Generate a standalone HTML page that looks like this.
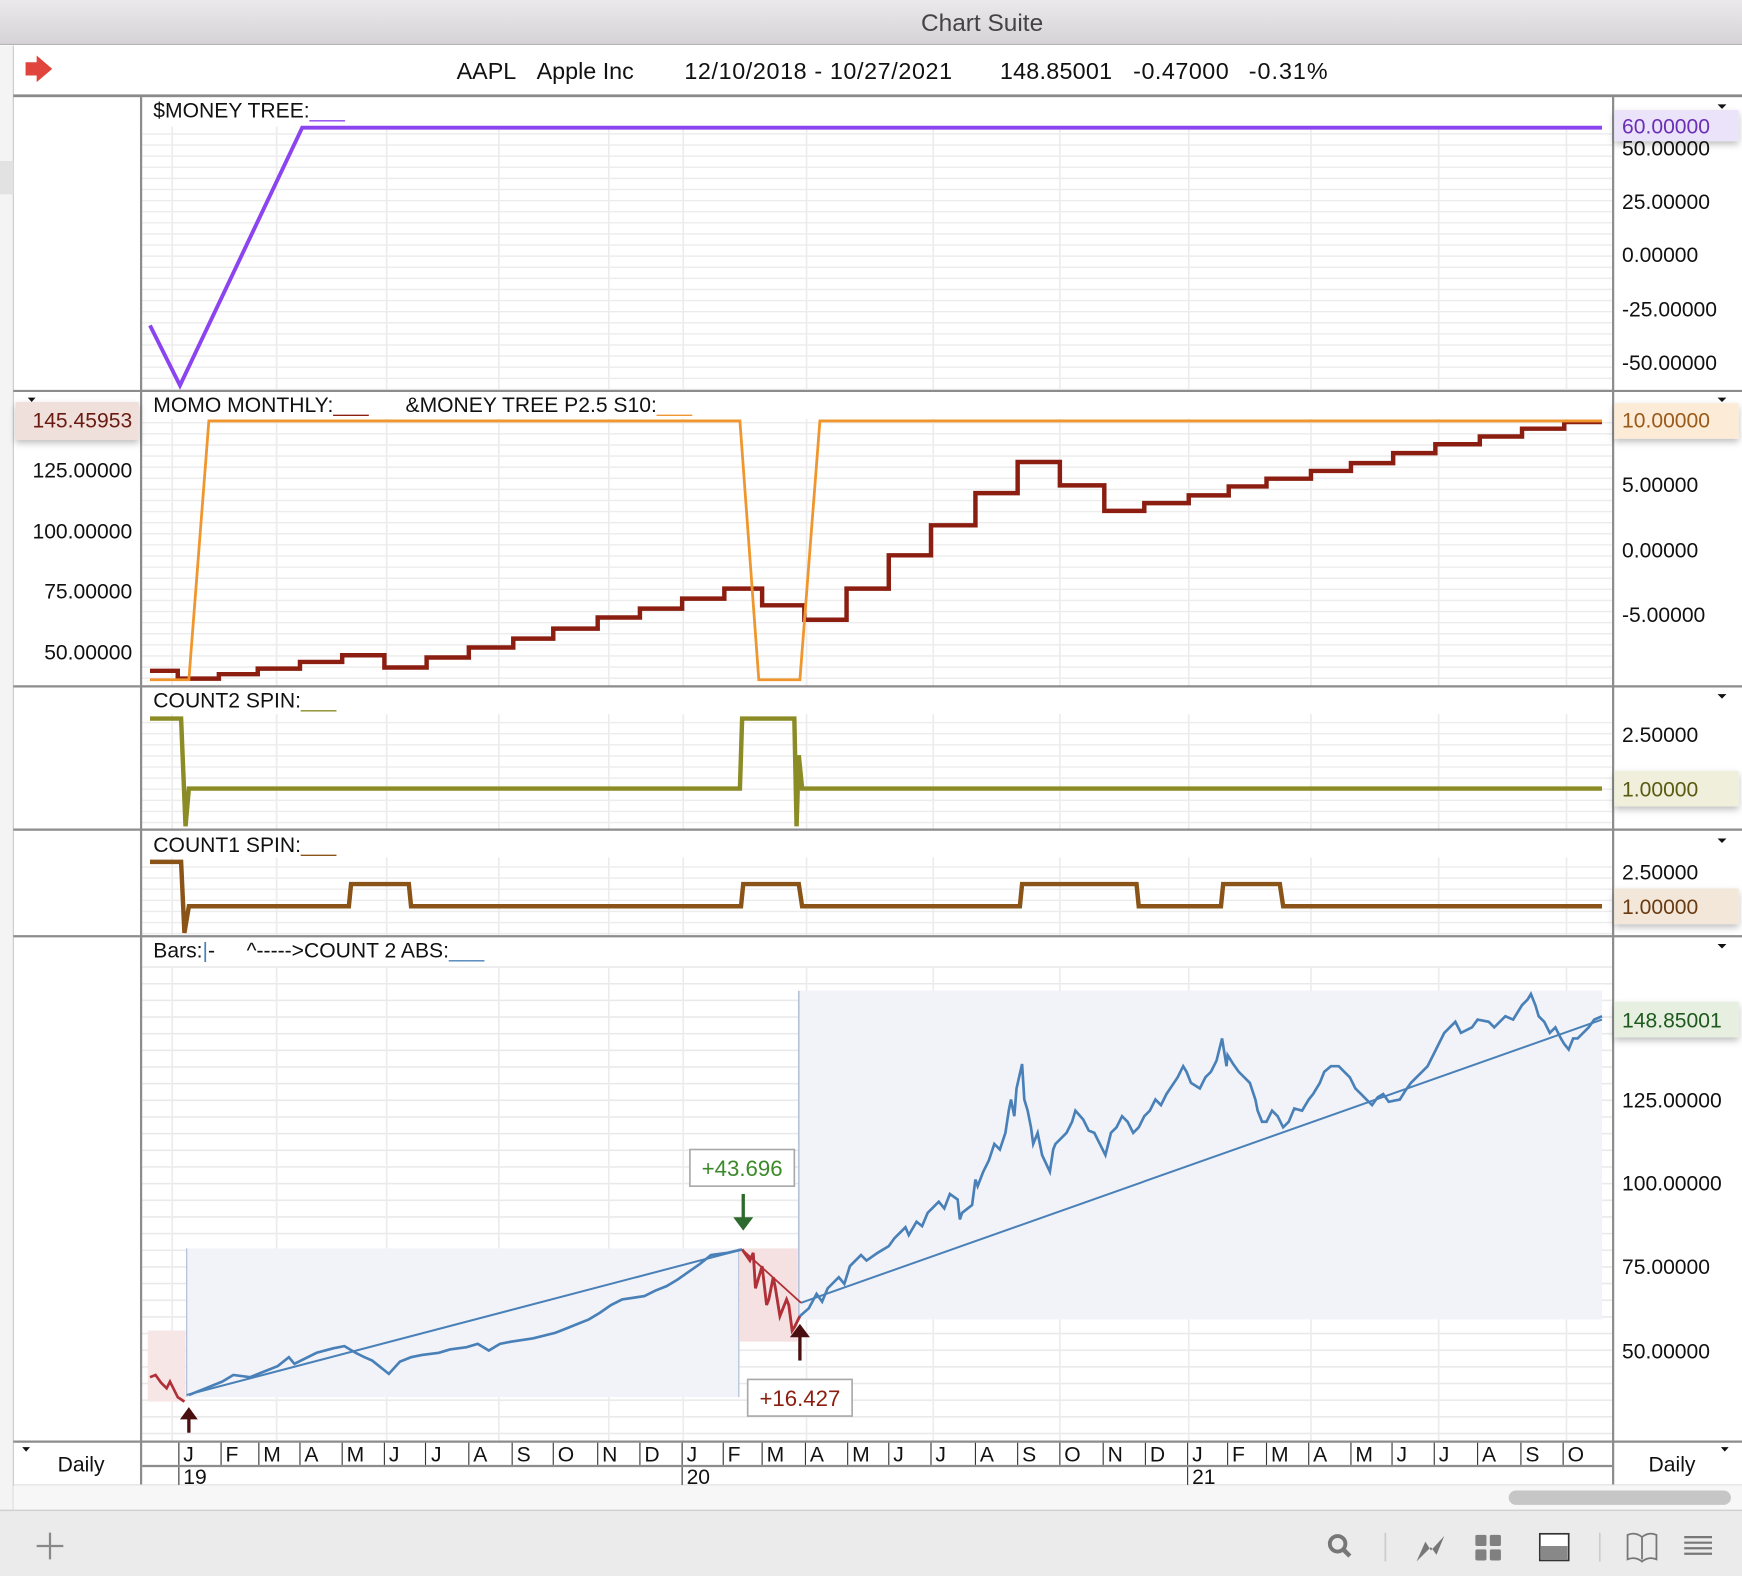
<!DOCTYPE html>
<html><head><meta charset="utf-8"><style>
html,body{margin:0;padding:0;background:#fff;}
svg{display:block;}
text{font-family:"Liberation Sans",Arial,sans-serif;}
</style></head><body>
<svg width="1742" height="1576" viewBox="0 0 1568 1419" preserveAspectRatio="none" xmlns="http://www.w3.org/2000/svg">
<defs>
<linearGradient id="tb" x1="0" y1="0" x2="0" y2="1"><stop offset="0" stop-color="#ebe9eb"/><stop offset="1" stop-color="#d5d3d5"/></linearGradient>
<pattern id="hg" width="20" height="10" patternUnits="userSpaceOnUse"><rect width="20" height="10" fill="#fff"/><rect y="0" width="20" height="1.2" fill="#ebebeb"/></pattern>
<pattern id="hg2" width="20" height="15" patternUnits="userSpaceOnUse"><rect width="20" height="15" fill="#fff"/><rect y="0" width="20" height="1.4" fill="#e9e9e9"/></pattern>
<filter id="sh" x="-20%" y="-30%" width="140%" height="180%"><feDropShadow dx="0" dy="3" stdDeviation="3" flood-color="#000" flood-opacity="0.25"/></filter>
</defs>
<rect width="1568" height="1419" fill="#fff"/>
<rect x="0" y="0" width="1568" height="40" fill="url(#tb)"/>
<line x1="0" y1="40" x2="1568" y2="40" stroke="#b5b5b5"/>
<text x="884" y="28" font-size="22" fill="#444" text-anchor="middle">Chart Suite</text>
<rect x="0" y="41" width="12" height="1378" fill="#f4f4f4"/>
<line x1="12" y1="41" x2="12" y2="1360" stroke="#c8c8c8"/>
<rect x="0" y="145" width="12" height="30" fill="#e2e2e2"/>
<path d="M23 56h10v-6l14 12-14 12v-6h-10z" fill="#e0443c"/>
<g font-size="21" fill="#111">
<text x="411" y="71">AAPL</text><text x="483" y="71">Apple Inc</text>
<text x="616" y="71" textLength="241">12/10/2018 - 10/27/2021</text>
<text x="900" y="71" textLength="101">148.85001</text><text x="1020" y="71" textLength="86">-0.47000</text><text x="1124" y="71" textLength="71">-0.31%</text>
</g>
<rect x="12" y="85" width="1556" height="2.5" fill="#8a8a8a"/>
<rect x="128" y="88" width="1323" height="264" fill="url(#hg)"/>
<rect x="128" y="353" width="1323" height="265" fill="url(#hg)"/>
<rect x="128" y="619" width="1323" height="128" fill="url(#hg)"/>
<rect x="128" y="748" width="1323" height="95" fill="url(#hg)"/>
<rect x="128" y="860" width="1323" height="437" fill="url(#hg2)"/>
<rect x="128" y="88" width="1323" height="26" fill="#fff"/>
<rect x="128" y="353" width="1323" height="24" fill="#fff"/>
<rect x="128" y="619" width="1323" height="24" fill="#fff"/>
<rect x="128" y="748" width="1323" height="24" fill="#fff"/>
<rect x="128" y="844" width="1323" height="20" fill="#fff"/>
<g stroke="#ececec" stroke-width="1.5">
<path d="M155 114V352M249 114V352M348 114V352M449 114V352M548 114V352M615 114V352M726 114V352M840 114V352M954 114V352M1070 114V352M1180 114V352M1295 114V352M1410 114V352"/>
<path d="M155 377V618M249 377V618M348 377V618M449 377V618M548 377V618M615 377V618M726 377V618M840 377V618M954 377V618M1070 377V618M1180 377V618M1295 377V618M1410 377V618"/>
<path d="M155 643V747M249 643V747M348 643V747M449 643V747M548 643V747M615 643V747M726 643V747M840 643V747M954 643V747M1070 643V747M1180 643V747M1295 643V747M1410 643V747"/>
<path d="M155 772V843M249 772V843M348 772V843M449 772V843M548 772V843M615 772V843M726 772V843M840 772V843M954 772V843M1070 772V843M1180 772V843M1295 772V843M1410 772V843"/>
<path d="M155 870V1297M249 870V1297M348 870V1297M449 870V1297M548 870V1297M615 870V1297M726 870V1297M840 870V1297M954 870V1297M1070 870V1297M1180 870V1297M1295 870V1297M1410 870V1297"/>
</g>
<g stroke="#8c8c8c" stroke-width="2">
<line x1="127" y1="87" x2="127" y2="1337"/>
<line x1="1452" y1="87" x2="1452" y2="1337"/>
<line x1="12" y1="352" x2="1568" y2="352"/>
<line x1="12" y1="618" x2="1568" y2="618"/>
<line x1="12" y1="747" x2="1568" y2="747"/>
<line x1="12" y1="843" x2="1568" y2="843"/>
</g>
<text x="138" y="106" font-size="19" fill="#111">$MONEY TREE:<tspan fill="#8b44f0">___</tspan></text>
<polyline points="135,293 162,347 272,115 1442,115" fill="none" stroke="#8b44f0" stroke-width="3.5"/>
<g font-size="19" fill="#111">
<text x="1460" y="140">50.00000</text><text x="1460" y="188">25.00000</text><text x="1460" y="236">0.00000</text><text x="1460" y="285">-25.00000</text><text x="1460" y="333">-50.00000</text>
</g>
<rect x="1453" y="99" width="112" height="28" fill="#ebe3fa" filter="url(#sh)"/>
<text x="1460" y="120" font-size="19" fill="#6a2fb5">60.00000</text>
<path d="M1546 94h8l-4 4z" fill="#111"/>
<text x="138" y="371" font-size="19" fill="#111">MOMO MONTHLY:<tspan fill="#8b1e10">___</tspan></text>
<text x="365" y="371" font-size="19" fill="#111">&amp;MONEY TREE P2.5 S10:<tspan fill="#f0962e">___</tspan></text>
<rect x="14" y="362" width="111" height="34" fill="#f0e0dc" filter="url(#sh)"/>
<text x="119" y="385" font-size="19" fill="#6a1a10" text-anchor="end">145.45953</text>
<path d="M25 358h7l-3.5 4z" fill="#111"/>
<g font-size="19" fill="#111" text-anchor="end">
<text x="119" y="430">125.00000</text><text x="119" y="485">100.00000</text><text x="119" y="539">75.00000</text><text x="119" y="594">50.00000</text>
</g>
<g font-size="19" fill="#111">
<text x="1460" y="443">5.00000</text><text x="1460" y="502">0.00000</text><text x="1460" y="560">-5.00000</text>
</g>
<rect x="1453" y="363" width="112" height="32" fill="#fcebd6" filter="url(#sh)"/>
<text x="1460" y="385" font-size="19" fill="#9a5a1a">10.00000</text>
<path d="M1546 358h8l-4 4z" fill="#111"/>
<polyline points="135,604 160,604 160,611 197,611 197,607 232,607 232,602 270,602 270,596 308,596 308,590 346,590 346,601 384,601 384,592 422,592 422,583 462,583 462,575 498,575 498,566 538,566 538,556 576,556 576,548 614,548 614,539 652,539 652,530 686,530 686,545 724,545 724,558 762,558 762,530 800,530 800,500 838,500 838,473 878,473 878,444 916,444 916,416 954,416 954,437 994,437 994,460 1030,460 1030,453 1070,453 1070,446 1106,446 1106,438 1140,438 1140,431 1180,431 1180,424 1216,424 1216,417 1254,417 1254,408 1292,408 1292,400 1332,400 1332,393 1370,393 1370,386 1408,386 1408,380 1442,380" fill="none" stroke="#8b1e10" stroke-width="4"/>
<polyline points="135,612 170,612 188,379 666,379 683,612 720,612 738,379 1442,379" fill="none" stroke="#f0962e" stroke-width="2.5"/>
<text x="138" y="637" font-size="19" fill="#111">COUNT2 SPIN:<tspan fill="#8a8a22">___</tspan></text>
<polyline points="135,647 163,647 167,744 170,710 666,710 668,647 715,647 717,744 719,680 722,710 1442,710" fill="none" stroke="#8c8c26" stroke-width="4"/>
<text x="1460" y="668" font-size="19" fill="#111">2.50000</text>
<rect x="1453" y="694" width="112" height="32" fill="#efefdc" filter="url(#sh)"/>
<text x="1460" y="717" font-size="19" fill="#5a5a10">1.00000</text>
<path d="M1546 625h8l-4 4z" fill="#111"/>
<text x="138" y="767" font-size="19" fill="#111">COUNT1 SPIN:<tspan fill="#8a5418">___</tspan></text>
<polyline points="135,776 163,776 166,840 170,816 314,816 316,796 368,796 370,816 667,816 669,796 719,796 722,816 918,816 920,796 1023,796 1025,816 1099,816 1101,796 1152,796 1155,816 1442,816" fill="none" stroke="#8a5418" stroke-width="4"/>
<text x="1460" y="792" font-size="19" fill="#111">2.50000</text>
<rect x="1453" y="800" width="112" height="32" fill="#f3e7da" filter="url(#sh)"/>
<text x="1460" y="823" font-size="19" fill="#6a3a10">1.00000</text>
<path d="M1546 755h8l-4 4z" fill="#111"/>
<text x="138" y="862" font-size="19" fill="#111">Bars:<tspan fill="#4a80b8">|</tspan>-</text>
<text x="222" y="862" font-size="19" fill="#111">^-----&gt;COUNT 2 ABS:<tspan fill="#4a80b8">___</tspan></text>
<path d="M1546 850h8l-4 4z" fill="#111"/>
<rect x="133" y="1198" width="34" height="64" fill="#f6e6e6"/>
<rect x="168" y="1124" width="497" height="134" fill="#f1f3f8"/>
<rect x="666" y="1124" width="52" height="84" fill="#f5e1e1"/>
<rect x="719" y="892" width="723" height="296" fill="#f1f3f8"/>
<line x1="168" y1="1124" x2="168" y2="1258" stroke="#b8c4da" stroke-width="1.2"/>
<line x1="665" y1="1124" x2="665" y2="1258" stroke="#b8c4da" stroke-width="1.2"/>
<line x1="719" y1="892" x2="719" y2="1188" stroke="#b8c4da" stroke-width="1.5"/>
<line x1="168" y1="1256" x2="668" y2="1125" stroke="#4a80b8" stroke-width="1.8"/>
<line x1="721" y1="1173" x2="1442" y2="918" stroke="#4a80b8" stroke-width="1.8"/>
<line x1="668" y1="1125" x2="721" y2="1173" stroke="#b03038" stroke-width="1.6"/>
<polyline points="135,1240 140,1238 145,1245 150,1250 153,1244 155,1248 160,1258 166,1262" fill="none" stroke="#b03038" stroke-width="2.4"/>
<polyline points="668,1125 675,1135 678,1128 680,1160 686,1140 690,1175 692,1170 696,1150 698,1160 702,1185 704,1180 708,1170 710,1175 713,1198 715,1195 720,1185" fill="none" stroke="#b03038" stroke-width="2.6"/>
<polyline points="170,1256 185,1250 200,1244 210,1238 225,1240 235,1236 250,1230 260,1222 265,1228 285,1218 300,1214 310,1212 320,1218 328,1222 335,1225 350,1237 360,1226 370,1222 380,1220 395,1218 405,1215 420,1213 430,1210 440,1216 450,1210 460,1208 480,1205 500,1200 510,1196 520,1192 530,1188 540,1182 550,1175 560,1170 580,1167 590,1162 600,1158 610,1152 620,1145 630,1138 640,1130 655,1128 668,1125" fill="none" stroke="#4a80b8" stroke-width="2.4"/>
<polyline points="720,1185 728,1178 735,1165 740,1172 745,1160 755,1150 760,1156 765,1140 775,1130 780,1135 790,1128 800,1122 805,1115 815,1105 818,1112 825,1100 830,1104 835,1092 845,1082 850,1088 855,1075 862,1080 864,1098 866,1092 875,1085 878,1062 880,1068 885,1055 890,1045 895,1030 900,1035 905,1020 908,1000 910,990 913,1005 915,980 920,958 922,990 925,1000 928,1015 930,1030 934,1020 938,1040 945,1055 948,1035 950,1030 955,1025 960,1020 965,1010 968,1000 975,1008 980,1018 985,1020 990,1030 995,1040 1000,1020 1005,1015 1010,1005 1015,1010 1020,1020 1025,1015 1030,1005 1035,1000 1040,990 1045,995 1050,985 1060,970 1065,960 1068,965 1072,975 1080,980 1085,970 1090,965 1095,955 1100,935 1104,960 1105,950 1110,958 1115,965 1120,970 1125,975 1130,990 1132,1000 1136,1010 1140,1010 1145,1000 1150,1005 1155,1015 1160,1010 1165,998 1172,1000 1178,990 1182,985 1188,975 1192,965 1198,960 1205,960 1210,965 1215,970 1220,980 1225,985 1230,990 1235,995 1240,988 1245,985 1250,992 1260,990 1265,982 1270,975 1275,970 1280,965 1285,960 1290,950 1295,940 1300,930 1305,925 1310,920 1315,930 1325,925 1330,918 1340,920 1345,925 1355,915 1362,918 1370,905 1375,900 1378,895 1382,905 1385,915 1390,920 1395,930 1400,925 1405,935 1408,940 1412,945 1416,935 1420,935 1425,930 1430,925 1435,918 1442,915" fill="none" stroke="#4a80b8" stroke-width="2.4"/>
<g font-size="19" fill="#111">
<text x="1460" y="997">125.00000</text><text x="1460" y="1072">100.00000</text><text x="1460" y="1147">75.00000</text><text x="1460" y="1223">50.00000</text>
</g>
<rect x="1453" y="902" width="112" height="32" fill="#e6efe0" filter="url(#sh)"/>
<text x="1460" y="925" font-size="19" fill="#1e5a1e">148.85001</text>
<rect x="621" y="1035" width="94" height="33" fill="#fff" stroke="#aaa" stroke-width="1.5"/>
<text x="668" y="1059" font-size="20" fill="#3a8a2a" text-anchor="middle">+43.696</text>
<path d="M669 1075V1098" stroke="#2e6a2e" stroke-width="3"/><path d="M660 1096h18l-9 12z" fill="#2e6a2e"/>
<rect x="673" y="1242" width="94" height="33" fill="#fff" stroke="#aaa" stroke-width="1.5"/>
<text x="720" y="1266" font-size="20" fill="#8b1e10" text-anchor="middle">+16.427</text>
<path d="M720 1225V1202" stroke="#4a1010" stroke-width="3"/><path d="M711 1204h18l-9 -12z" fill="#4a1010"/>
<path d="M170 1290V1276" stroke="#4a1010" stroke-width="3"/><path d="M162 1278h16l-8 -11z" fill="#4a1010"/>
<line x1="12" y1="1298" x2="1568" y2="1298" stroke="#8c8c8c" stroke-width="2"/>
<line x1="128" y1="1320" x2="1451" y2="1320" stroke="#8c8c8c" stroke-width="2"/>
<line x1="12" y1="1337" x2="1568" y2="1337" stroke="#dcdcdc"/>
<g stroke="#333" stroke-width="1">
<path d="M161 1299v20M199 1299v20M233 1299v20M270 1299v20M308 1299v20M346 1299v20M383 1299v20M422 1299v20M461 1299v20M498 1299v20M538 1299v20M576 1299v20M614 1299v20M651 1299v20M686 1299v20M725 1299v20M763 1299v20M800 1299v20M838 1299v20M878 1299v20M916 1299v20M954 1299v20M993 1299v20M1031 1299v20M1069 1299v20M1105 1299v20M1140 1299v20M1178 1299v20M1216 1299v20M1253 1299v20M1291 1299v20M1330 1299v20M1369 1299v20M1407 1299v20"/>
<path d="M161 1321v16M614 1321v16M1069 1321v16"/>
</g>
<g font-size="19" fill="#111">
<text x="165" y="1316">J</text><text x="203" y="1316">F</text><text x="237" y="1316">M</text><text x="274" y="1316">A</text><text x="312" y="1316">M</text><text x="350" y="1316">J</text><text x="388" y="1316">J</text><text x="426" y="1316">A</text><text x="465" y="1316">S</text><text x="502" y="1316">O</text><text x="542" y="1316">N</text><text x="580" y="1316">D</text>
<text x="618" y="1316">J</text><text x="655" y="1316">F</text><text x="690" y="1316">M</text><text x="729" y="1316">A</text><text x="767" y="1316">M</text><text x="804" y="1316">J</text><text x="842" y="1316">J</text><text x="882" y="1316">A</text><text x="920" y="1316">S</text><text x="958" y="1316">O</text><text x="997" y="1316">N</text><text x="1035" y="1316">D</text>
<text x="1073" y="1316">J</text><text x="1109" y="1316">F</text><text x="1144" y="1316">M</text><text x="1182" y="1316">A</text><text x="1220" y="1316">M</text><text x="1257" y="1316">J</text><text x="1295" y="1316">J</text><text x="1334" y="1316">A</text><text x="1373" y="1316">S</text><text x="1411" y="1316">O</text>
<text x="165" y="1336">19</text><text x="618" y="1336">20</text><text x="1073" y="1336">21</text>
<text x="73" y="1325" text-anchor="middle">Daily</text><text x="1505" y="1325" text-anchor="middle">Daily</text>
</g>
<path d="M20 1303h7l-3.5 4z" fill="#111"/><path d="M1549 1303h7l-3.5 4z" fill="#111"/>
<rect x="12" y="1338" width="1556" height="22" fill="#f7f7f7"/>
<rect x="1358" y="1342" width="200" height="13" rx="6.5" fill="#c6c6c6"/>
<line x1="0" y1="1360" x2="1568" y2="1360" stroke="#d0d0d0" stroke-width="1.5"/>
<rect x="0" y="1361" width="1568" height="58" fill="#ebebeb"/>
<path d="M45 1380v24M33 1392h24" stroke="#888" stroke-width="2"/>
<circle cx="1204" cy="1390" r="7" fill="none" stroke="#777" stroke-width="3.5"/>
<path d="M1209 1395l6 6" stroke="#777" stroke-width="4"/>
<line x1="1247" y1="1380" x2="1247" y2="1406" stroke="#ccc" stroke-width="1.5"/>
<path d="M1275 1406l8-18 5 8 12-13-7 17-5-7z" fill="#777"/>
<g fill="#808080"><rect x="1328" y="1382" width="10" height="10" rx="1.5"/><rect x="1341" y="1382" width="10" height="10" rx="1.5"/><rect x="1328" y="1395" width="10" height="10" rx="1.5"/><rect x="1341" y="1395" width="10" height="10" rx="1.5"/></g>
<rect x="1386" y="1381" width="26" height="24" fill="#fff" stroke="#333" stroke-width="1.5"/>
<rect x="1387" y="1392" width="24" height="12" fill="#888"/>
<line x1="1440" y1="1380" x2="1440" y2="1406" stroke="#ccc" stroke-width="1.5"/>
<path d="M1465 1404v-22q7-3 13 2q6-5 13-2v22q-7-3-13 2q-6-5-13-2zM1478 1384v20" fill="none" stroke="#777" stroke-width="1.6"/>
<path d="M1516 1384h25M1516 1389h25M1516 1394h25M1516 1399h25" stroke="#777" stroke-width="2"/>
</svg>
</body></html>
